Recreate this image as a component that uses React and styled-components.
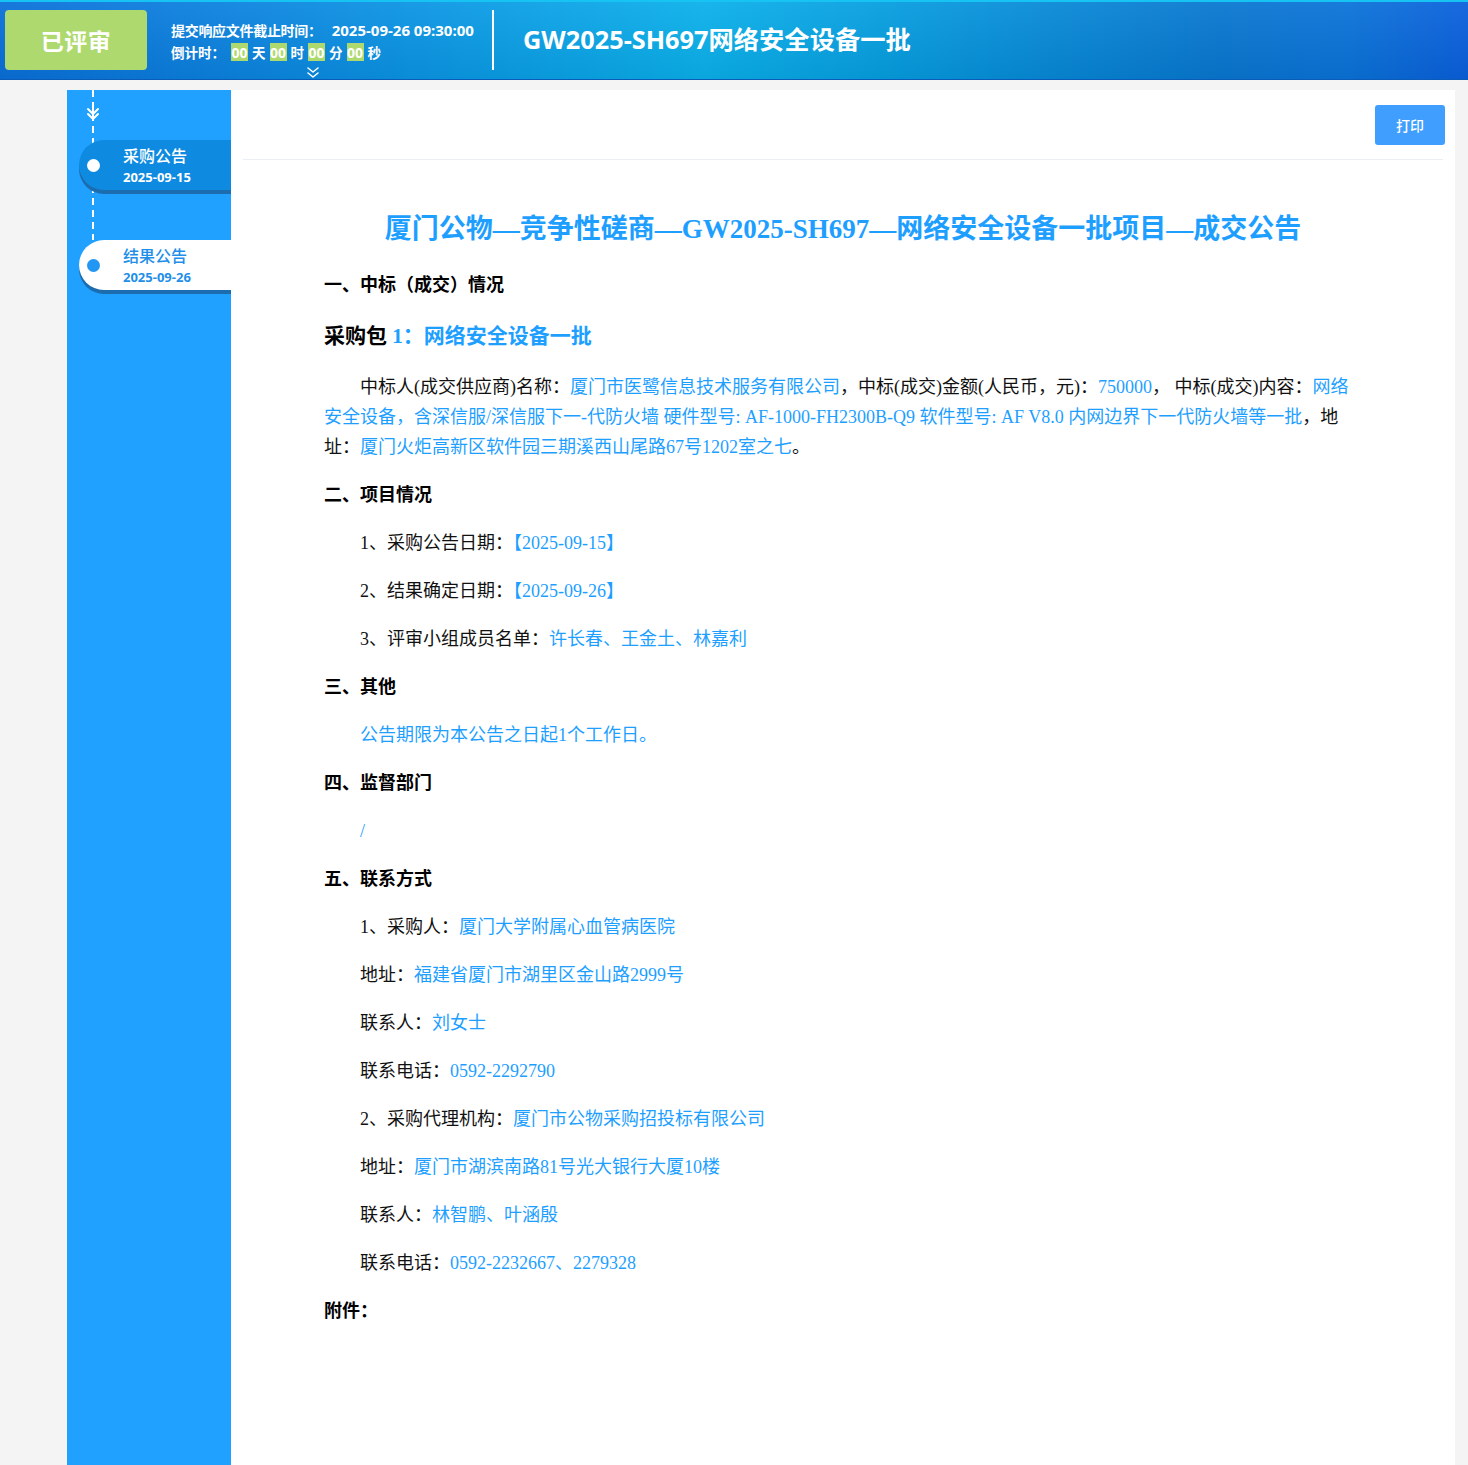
import React from "react";
import styled, { createGlobalStyle } from "styled-components";

const GlobalStyle = createGlobalStyle`
  html, body { margin: 0; padding: 0; }
  body {
    background: #f4f4f4;
    font-family: "Liberation Serif", "Noto Sans CJK SC", serif;
  }
  * { box-sizing: border-box; }
`;

const Header = styled.header`
  height: 80px;
  display: flex;
  align-items: flex-start;
  border-top: 2px solid #17c3f2;
  border-bottom: 1px solid #0a5cb8;
  background:
    linear-gradient(180deg, rgba(255,255,255,0.06) 0%, rgba(0,0,0,0.06) 100%),
    linear-gradient(90deg, #0a6fd9 0%, #0b86e0 18%, #0aa0e6 36%, #0ab0ea 48%, #069ee0 60%, #0788d6 72%, #0878cf 82%, #0a72d8 92%, #0a5fdc 100%);
  font-family: "Open Sans", "Noto Sans CJK SC", sans-serif;
  color: #fff;
`;

const StatusBadge = styled.div`
  margin: 8px 0 0 5px;
  width: 142px;
  height: 60px;
  border-radius: 4px;
  background: #aed96e;
  color: #fff;
  font-size: 23px;
  font-weight: 700;
  display: flex;
  align-items: center;
  justify-content: center;
  letter-spacing: 0.5px;
`;

const Deadline = styled.div`
  margin: 17px 0 0 24px;
  display: flex;
  flex-direction: column;
  width: 306px;
`;

const DeadlineRow = styled.div`
  display: flex;
  align-items: center;
  height: 22px;
  font-size: 13.5px;
  font-weight: 700;
  white-space: nowrap;
`;

const DeadlineLabel = styled.span`
  font-size: 14px;
  letter-spacing: -0.3px;
`;

const DeadlineValue = styled.span`
  font-size: 15px;
  margin-left: 10px;
`;

const CountBox = styled.span`
  display: inline-flex;
  align-items: center;
  justify-content: center;
  width: 17px;
  height: 18px;
  background: #aed96e;
  color: #fff;
  font-size: 14px;
  font-weight: 700;
  margin: 0 4px 0 ${(p) => (p.$first ? "6px" : "4px")};
`;

const Chevron = styled.div`
  align-self: flex-start;
  margin: 3px 0 0 135px;
  height: 14px;
  line-height: 0;
`;

const Divider = styled.div`
  margin: 8px 0 0 15px;
  width: 2px;
  height: 60px;
  background: #fff;
`;

const HeaderTitle = styled.h1`
  margin: 18px 0 0 29px;
  font-size: 25.3px;
  font-weight: 700;
  line-height: 38px;
  white-space: nowrap;
`;

const Body = styled.div`
  display: flex;
  padding: 10px 13px 0 67px;
  min-height: calc(100vh - 80px);
`;

const Sidebar = styled.aside`
  position: relative;
  width: 164px;
  flex: none;
  background: #20a0ff;
  padding-top: 13px;
`;

const Track = styled.div`
  position: absolute;
  left: 25px;
  top: 0;
  height: 150px;
  width: 2px;
  background: repeating-linear-gradient(180deg, #fff 0 7px, transparent 7px 12px);
`;

const TrackArrow = styled.div`
  position: relative;
  margin-left: 19px;
  width: 14px;
  height: 18px;
  line-height: 0;
`;

const NavItem = styled.div`
  position: relative;
  margin: ${(p) => (p.$first ? "19px" : "50px")} 0 0 12px;
  height: 50px;
  border-radius: 26px 0 0 26px;
  background: ${(p) => (p.$active ? "#0e8ae0" : "#fff")};
  box-shadow: 0 4px 0 #1b6db0;
  color: ${(p) => (p.$active ? "#fff" : "#1f8fe8")};
  padding: 6px 0 0 44px;
  font-family: "Open Sans", "Noto Sans CJK SC", sans-serif;
`;

const NavDot = styled.span`
  position: absolute;
  left: 8px;
  top: 19px;
  width: 13px;
  height: 13px;
  border-radius: 50%;
  background: ${(p) => (p.$active ? "#fff" : "#2196f3")};
`;

const NavName = styled.div`
  font-size: 16px;
  line-height: 20px;
  font-weight: 500;
`;

const NavDate = styled.div`
  font-size: 13px;
  font-weight: 700;
  line-height: 18px;
  margin-top: 2px;
`;

const Main = styled.main`
  flex: 1;
  background: #fff;
  padding-bottom: 40px;
`;

const TopBar = styled.div`
  margin: 0 12px;
  height: 70px;
  border-bottom: 1px solid #ebeef5;
  display: flex;
  align-items: center;
  justify-content: flex-end;
`;

const PrintButton = styled.button`
  margin-right: -2px;
  width: 70px;
  height: 40px;
  border: none;
  border-radius: 3px;
  background: #409eff;
  color: #fff;
  font-family: "Noto Sans CJK SC", sans-serif;
  font-size: 14px;
  font-weight: 500;
  cursor: pointer;
`;

const Article = styled.article`
  padding: 0 0 0 93px;
  color: #111;
  font-size: 18px;
`;

const Title = styled.h2`
  margin: 49px 0 21px -93px;
  text-align: center;
  font-size: 27px;
  line-height: 40px;
  font-weight: 700;
  color: #1e9fff;
`;

const Content = styled.div`
  max-width: 1032px;
`;

const SectionHeading = styled.h3`
  margin: 0 0 ${(p) => p.$gap || "18px"};
  font-size: 18px;
  line-height: 30px;
  font-weight: 700;
  color: #000;
`;

const PackageHeading = styled.h4`
  margin: 0 0 20px;
  font-size: 21px;
  line-height: 32px;
  font-weight: 700;
  color: #000;
`;

const Para = styled.p`
  margin: 0 0 18px;
  line-height: 30px;
  text-indent: 2em;
`;

const Blue = styled.span`
  color: #1e9fff;
`;

const ArrowDown = () => (
  <svg width="14" height="18" viewBox="0 0 14 18" fill="none" stroke="#fff" strokeWidth="2" strokeLinecap="round" strokeLinejoin="round">
    <path d="M7 1v15" />
    <path d="M2 6l5 5 5-5" />
    <path d="M2 11l5 5 5-5" />
  </svg>
);

const DoubleChevron = () => (
  <svg width="14" height="13" viewBox="0 0 14 13" fill="none" stroke="#fff" strokeWidth="1.6" strokeLinecap="round" strokeLinejoin="round">
    <path d="M2 2l5 4 5-4" />
    <path d="M2 7l5 4 5-4" />
  </svg>
);

export default function App() {
  return (
    <>
      <GlobalStyle />
      <Header>
        <StatusBadge>已评审</StatusBadge>
        <Deadline>
          <DeadlineRow>
            <DeadlineLabel>提交响应文件截止时间：</DeadlineLabel>
            <DeadlineValue>2025-09-26 09:30:00</DeadlineValue>
          </DeadlineRow>
          <DeadlineRow>
            倒计时：
            <CountBox $first>00</CountBox>天
            <CountBox>00</CountBox>时
            <CountBox>00</CountBox>分
            <CountBox>00</CountBox>秒
          </DeadlineRow>
          <Chevron>
            <DoubleChevron />
          </Chevron>
        </Deadline>
        <Divider />
        <HeaderTitle>GW2025-SH697网络安全设备一批</HeaderTitle>
      </Header>
      <Body>
        <Sidebar>
          <Track />
          <TrackArrow>
            <ArrowDown />
          </TrackArrow>
          <NavItem $active $first>
            <NavDot $active />
            <NavName>采购公告</NavName>
            <NavDate>2025-09-15</NavDate>
          </NavItem>
          <NavItem>
            <NavDot />
            <NavName>结果公告</NavName>
            <NavDate>2025-09-26</NavDate>
          </NavItem>
        </Sidebar>
        <Main>
          <TopBar>
            <PrintButton>打印</PrintButton>
          </TopBar>
          <Article>
            <Title>厦门公物—竞争性磋商—GW2025-SH697—网络安全设备一批项目—成交公告</Title>
            <Content>
              <SectionHeading $gap="20px">一、中标（成交）情况</SectionHeading>
              <PackageHeading>
                采购包 <Blue>1：网络安全设备一批</Blue>
              </PackageHeading>
              <Para>
                中标人(成交供应商)名称：<Blue>厦门市医鹭信息技术服务有限公司</Blue>，中标(成交)金额(人民币，元)：<Blue>750000</Blue>， 中标(成交)内容：<Blue>网络安全设备，含深信服/深信服下一-代防火墙 硬件型号: AF-1000-FH2300B-Q9 软件型号: AF V8.0 内网边界下一代防火墙等一批</Blue>，地址：<Blue>厦门火炬高新区软件园三期溪西山尾路67号1202室之七</Blue>。
              </Para>
              <SectionHeading>二、项目情况</SectionHeading>
              <Para>1、采购公告日期：<Blue>【2025-09-15】</Blue></Para>
              <Para>2、结果确定日期：<Blue>【2025-09-26】</Blue></Para>
              <Para>3、评审小组成员名单：<Blue>许长春、王金土、林嘉利</Blue></Para>
              <SectionHeading>三、其他</SectionHeading>
              <Para><Blue>公告期限为本公告之日起1个工作日。</Blue></Para>
              <SectionHeading>四、监督部门</SectionHeading>
              <Para><Blue>/</Blue></Para>
              <SectionHeading>五、联系方式</SectionHeading>
              <Para>1、采购人：<Blue>厦门大学附属心血管病医院</Blue></Para>
              <Para>地址：<Blue>福建省厦门市湖里区金山路2999号</Blue></Para>
              <Para>联系人：<Blue>刘女士</Blue></Para>
              <Para>联系电话：<Blue>0592-2292790</Blue></Para>
              <Para>2、采购代理机构：<Blue>厦门市公物采购招投标有限公司</Blue></Para>
              <Para>地址：<Blue>厦门市湖滨南路81号光大银行大厦10楼</Blue></Para>
              <Para>联系人：<Blue>林智鹏、叶涵殷</Blue></Para>
              <Para>联系电话：<Blue>0592-2232667、2279328</Blue></Para>
              <SectionHeading>附件：</SectionHeading>
            </Content>
          </Article>
        </Main>
      </Body>
    </>
  );
}
